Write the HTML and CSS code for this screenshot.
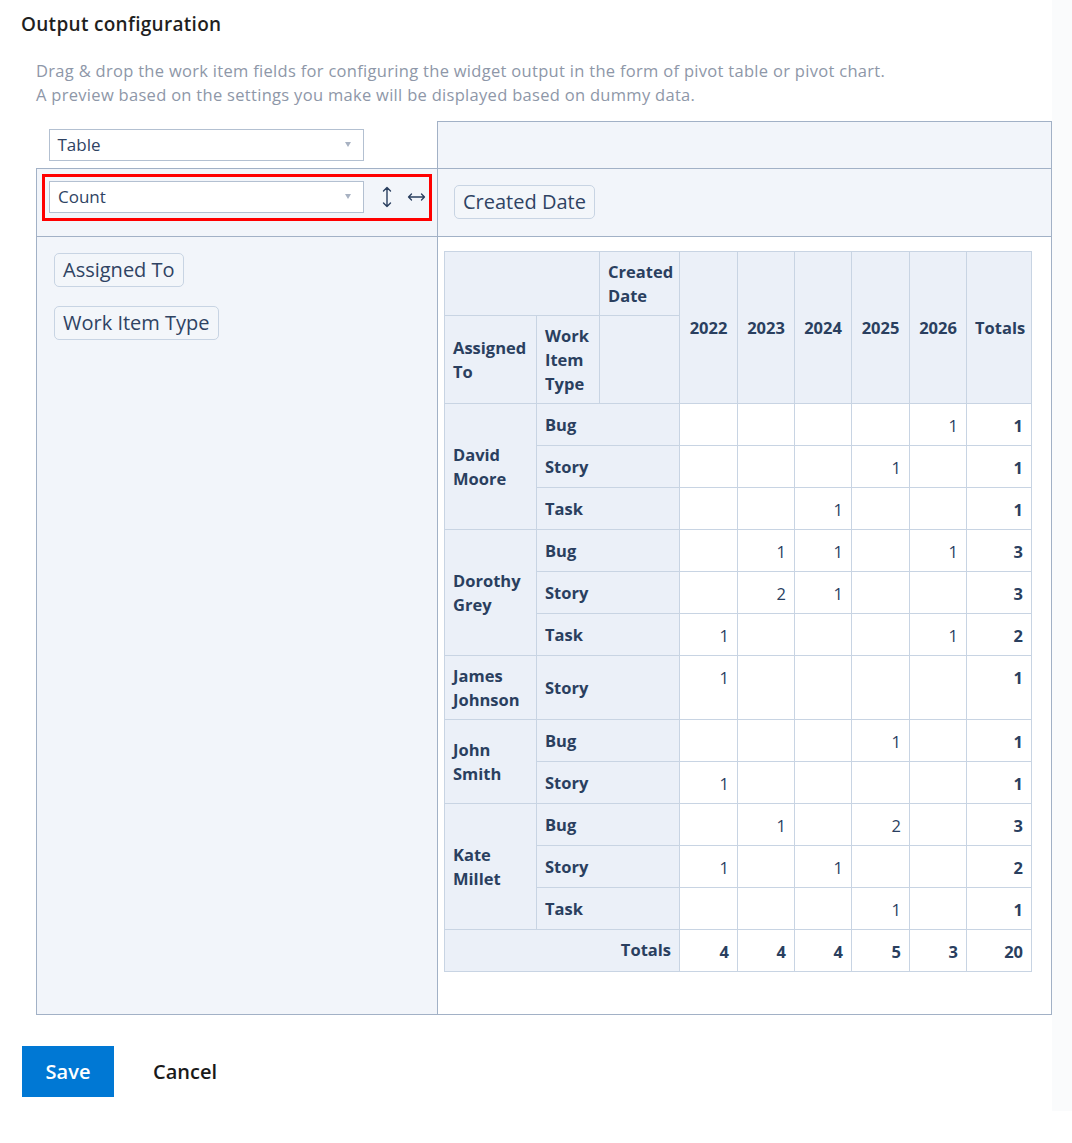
FILE: index.html
```html
<!DOCTYPE html>
<html lang="en">
<head>
<meta charset="utf-8">
<title>Output configuration</title>
<link rel="stylesheet" href="styles.css">
</head>
<body>
<div class="page">
  <div class="panel">
    <h2 class="title">Output configuration</h2>
    <p class="desc">Drag &amp; drop the work item fields for configuring the widget output in the form of pivot table or pivot chart.<br>A preview based on the settings you make will be displayed based on dummy data.</p>

    <table class="ui">
      <colgroup><col class="ui-left"><col class="ui-right"></colgroup>
      <tr>
        <td class="renderer">
          <div class="select"><span>Table</span><span class="caret"></span></div>
        </td>
        <td class="unused"></td>
      </tr>
      <tr>
        <td class="vals">
          <div class="vals-inner">
            <div class="select"><span>Count</span><span class="caret"></span></div>
            <svg class="ico-v" width="10" height="24" viewBox="0 0 10 24"><path d="M5 2.5V21.5M1.5 6L5 2.5L8.5 6M1.5 18L5 21.5L8.5 18" fill="none" stroke="#2a3f5f" stroke-width="1.4" stroke-linecap="round" stroke-linejoin="round"/></svg>
            <svg class="ico-h" width="19" height="10" viewBox="0 0 19 10"><path d="M1.5 5H17.5M4.5 2L1.5 5L4.5 8M14.5 2L17.5 5L14.5 8" fill="none" stroke="#2a3f5f" stroke-width="1.3" stroke-linecap="round" stroke-linejoin="round"/></svg>
            <div class="highlight"></div>
          </div>
        </td>
        <td class="cols">
          <span class="chip">Created Date</span>
        </td>
      </tr>
      <tr>
        <td class="rows">
          <div class="chips">
            <span class="chip">Assigned To</span>
            <span class="chip">Work Item Type</span>
          </div>
        </td>
        <td class="output">
          <table class="pvt">
            <colgroup>
              <col class="w1"><col class="w2"><col class="w3"><col class="w4"><col class="w5"><col class="w6"><col class="w7"><col class="w8"><col class="w9">
            </colgroup>
            <thead>
              <tr class="h1">
                <th colspan="2"></th>
                <th>Created Date</th>
                <th rowspan="2" class="yr">2022</th>
                <th rowspan="2" class="yr">2023</th>
                <th rowspan="2" class="yr">2024</th>
                <th rowspan="2" class="yr">2025</th>
                <th rowspan="2" class="yr">2026</th>
                <th rowspan="2" class="yr">Totals</th>
              </tr>
              <tr class="h2">
                <th class="mid">Assigned To</th>
                <th>Work Item Type</th>
                <th></th>
              </tr>
            </thead>
            <tbody>
              <tr><th rowspan="3" class="mid">David Moore</th><th colspan="2" class="mid">Bug</th><td></td><td></td><td></td><td></td><td>1</td><td class="tot">1</td></tr>
              <tr><th colspan="2" class="mid">Story</th><td></td><td></td><td></td><td>1</td><td></td><td class="tot">1</td></tr>
              <tr><th colspan="2" class="mid">Task</th><td></td><td></td><td>1</td><td></td><td></td><td class="tot">1</td></tr>

              <tr><th rowspan="3" class="mid">Dorothy Grey</th><th colspan="2" class="mid">Bug</th><td></td><td>1</td><td>1</td><td></td><td>1</td><td class="tot">3</td></tr>
              <tr><th colspan="2" class="mid">Story</th><td></td><td>2</td><td>1</td><td></td><td></td><td class="tot">3</td></tr>
              <tr><th colspan="2" class="mid">Task</th><td>1</td><td></td><td></td><td></td><td>1</td><td class="tot">2</td></tr>

              <tr><th class="mid">James Johnson</th><th colspan="2" class="mid">Story</th><td>1</td><td></td><td></td><td></td><td></td><td class="tot">1</td></tr>

              <tr><th rowspan="2" class="mid">John Smith</th><th colspan="2" class="mid">Bug</th><td></td><td></td><td></td><td>1</td><td></td><td class="tot">1</td></tr>
              <tr><th colspan="2" class="mid">Story</th><td>1</td><td></td><td></td><td></td><td></td><td class="tot">1</td></tr>

              <tr><th rowspan="3" class="mid">Kate Millet</th><th colspan="2" class="mid">Bug</th><td></td><td>1</td><td></td><td>2</td><td></td><td class="tot">3</td></tr>
              <tr><th colspan="2" class="mid">Story</th><td>1</td><td></td><td>1</td><td></td><td></td><td class="tot">2</td></tr>
              <tr><th colspan="2" class="mid">Task</th><td></td><td></td><td></td><td>1</td><td></td><td class="tot">1</td></tr>

              <tr><th colspan="3" class="totlabel">Totals</th><td class="tot">4</td><td class="tot">4</td><td class="tot">4</td><td class="tot">5</td><td class="tot">3</td><td class="tot">20</td></tr>
            </tbody>
          </table>
        </td>
      </tr>
    </table>

    <div class="actions">
      <button class="btn-save">Save</button>
      <button class="btn-cancel">Cancel</button>
    </div>
  </div>
  <div class="strip"></div>
</div>
</body>
</html>
```
FILE: styles.css
```css
html, body {
  margin: 0;
  padding: 0;
  background: #ffffff;
}
body {
  font-family: "Open Sans", "Noto Sans", sans-serif;
  color: #2a3f5f;
}
.page {
  display: flex;
  width: 1072px;
}
.panel {
  width: 1052px;
  height: 1111px;
  background: #ffffff;
}
.strip {
  flex: 1;
  height: 1111px;
  background: #fafbfc;
}
.title {
  margin: 0;
  padding: 12px 0 0 21px;
  font-size: 19px;
  letter-spacing: 0.3px;
  line-height: 24px;
  font-weight: 600;
  color: #1f1f1f;
}
.desc {
  margin: 23px 0 0 36px;
  font-size: 16.5px;
  letter-spacing: 0.3px;
  line-height: 24px;
  color: #8e97a8;
}
.ui {
  margin: 14px 0 0 36px;
  border-collapse: collapse;
  table-layout: fixed;
  width: 1015px;
}
.ui-left { width: 401px; }
.ui-right { width: 614px; }
.ui > tbody > tr > td,
.ui > tr > td {
  vertical-align: top;
  padding: 0;
}
.renderer {
  border: none;
  padding: 7px 0 7px 12px !important;
  background: #ffffff;
}
.unused, .vals, .cols, .rows {
  border: 1px solid #a2b1c6;
  background: #f2f5fa;
}
.output {
  border: 1px solid #a2b1c6;
  background: #ffffff;
  padding: 14px 6px 42px 6px !important;
}
.select {
  box-sizing: border-box;
  width: 315px;
  height: 32px;
  border: 1px solid #b3c0d1;
  background: #ffffff;
  display: flex;
  align-items: center;
  justify-content: space-between;
  padding: 0 12px 0 8px;
  font-size: 17px;
  color: #2f4363;
}
.caret {
  width: 0;
  height: 0;
  border-left: 3.5px solid transparent;
  border-right: 3.5px solid transparent;
  border-top: 5px solid #a8b2c2;
}
.vals-inner {
  position: relative;
  display: flex;
  align-items: center;
  padding: 12px 0 0 12px;
}
.ico-v { margin-left: 18px; }
.ico-h { margin-left: 15px; }
.highlight {
  position: absolute;
  left: 5px;
  top: 5px;
  width: 384px;
  height: 41px;
  border: 3px solid #ff0000;
}
.cols {
  padding: 16px 0 17px 16px !important;
}
.chip {
  display: inline-block;
  box-sizing: border-box;
  height: 34px;
  padding: 4px 8px;
  border: 1px solid #c8d4e3;
  border-radius: 5px;
  background: #f3f6fa;
  font-size: 20px;
  line-height: 24px;
  color: #2f4363;
  white-space: nowrap;
}
.chips {
  display: flex;
  flex-direction: column;
  align-items: flex-start;
  gap: 19px;
  padding: 16px 0 0 17px;
}

/* pivot table */
.pvt {
  border-collapse: collapse;
  table-layout: fixed;
  width: 587px;
  font-size: 16.5px;
  line-height: 24px;
}
.w1 { width: 92px; }
.w2 { width: 63px; }
.w3 { width: 80px; }
.w4 { width: 58px; }
.w5 { width: 57px; }
.w6 { width: 57px; }
.w7 { width: 58px; }
.w8 { width: 57px; }
.w9 { width: 65px; }
.pvt th {
  background: #ebf0f8;
  border: 1px solid #c8d4e3;
  padding: 8.5px 8px 6.5px 8px;
  text-align: left;
  vertical-align: top;
  font-weight: 700;
  color: #2a3f5f;
}
.pvt th.mid { vertical-align: middle; }
.pvt th.yr {
  vertical-align: middle;
  text-align: center;
}
.pvt th.totlabel { text-align: right; vertical-align: top; }
.pvt td {
  background: #ffffff;
  border: 1px solid #c8d4e3;
  padding: 10px 8px 7px 8px;
  text-align: right;
  vertical-align: top;
  color: #2a3f5f;
}
.pvt td.tot { font-weight: 700; }

.actions {
  display: flex;
  align-items: center;
  margin: 31px 0 0 22px;
}
.btn-save {
  width: 92px;
  height: 51px;
  border: none;
  background: #0078d4;
  color: #ffffff;
  font-family: "Open Sans", "Noto Sans", sans-serif;
  font-size: 20px;
  font-weight: 600;
}
.btn-cancel {
  margin-left: 23px;
  padding: 0 16px;
  height: 51px;
  border: none;
  background: transparent;
  color: #1a1a1a;
  font-family: "Open Sans", "Noto Sans", sans-serif;
  font-size: 20px;
  font-weight: 600;
}
```
